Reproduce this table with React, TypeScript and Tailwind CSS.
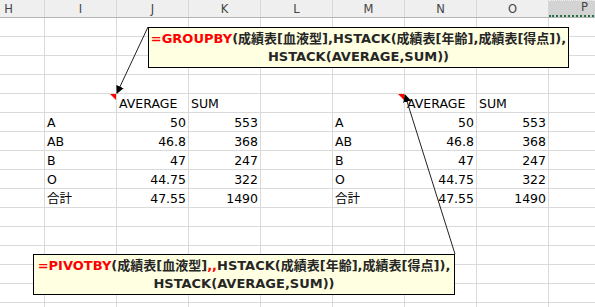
import React from "react";

const cols = ["H", "I", "J", "K", "L", "M", "N", "O", "P"];

type Cell = { t: string; r?: boolean };

const tableRows: Cell[][] = [
    [{ t: "" }, { t: "AVERAGE" }, { t: "SUM" }],
    [{ t: "A" }, { t: "50", r: true }, { t: "553", r: true }],
    [{ t: "AB" }, { t: "46.8", r: true }, { t: "368", r: true }],
    [{ t: "B" }, { t: "47", r: true }, { t: "247", r: true }],
    [{ t: "O" }, { t: "44.75", r: true }, { t: "322", r: true }],
    [{ t: "合計" }, { t: "47.55", r: true }, { t: "1490", r: true }],
];

function rowCells(i: number): Cell[] {
    // rows 5..10 hold the two result tables (I-K and M-O)
    const empty = { t: "" };
    const d = tableRows[i - 5];
    if (!d) return cols.map(() => empty);
    return [empty, d[0], d[1], d[2], empty, d[0], d[1], d[2], empty];
}

function Callout({ className, fn, mid }: { className: string; fn: string; mid: React.ReactNode }) {
    return (
        <div className={`absolute h-[41px] border border-black bg-[#ffffe1] pt-[2px] text-center font-bold text-[13px] leading-[18px] text-[#262626] font-['DejaVu_Sans','Noto_Sans_CJK_JP',sans-serif] whitespace-nowrap ${className}`}>
            <div>
                <span className="text-[#ff0000]">{fn}</span>
                {mid}
            </div>
            <div>HSTACK(AVERAGE,SUM))</div>
        </div>
    );
}

export default function App() {
    const rows = Array.from({ length: 16 }, (_, k) => k + 1);

    return (
        <div className="relative w-[595px] h-[307px] overflow-hidden bg-white font-['DejaVu_Sans','Noto_Sans_CJK_JP',sans-serif]">
            {/* column headers */}
            <div className="flex h-[18px] ml-[-27px] bg-[#efefef] border-b border-[#b5b5b5]">
                {cols.map((c) => (
                    <div
                        key={c}
                        className={`w-[72px] shrink-0 flex items-end justify-center pb-[1px] text-[11.5px] leading-[14px] text-[#444] border-r border-[#d8d8d8] ${
                            c === "P" ? "bg-[#d3d3d3] border-b-2 border-b-[#217346] border-t border-dotted border-t-[#f0f0f0]" : ""
                        }`}
                    >
                        {c}
                    </div>
                ))}
            </div>

            {/* grid */}
            {rows.map((r) => (
                <div key={r} className="flex h-[19px] ml-[-27px]">
                    {rowCells(r).map((cell, ci) => (
                        <div
                            key={ci}
                            className={`relative w-[72px] shrink-0 flex items-end pb-[1px] px-[2px] border-r border-b border-[#dadada] text-[12.5px] leading-[15px] text-black ${
                                cell.r ? "justify-end" : "justify-start"
                            }`}
                        >
                            {cell.t}
                            {r === 5 && (ci === 1 || ci === 5) && (
                                <span className="absolute top-0 right-0 w-0 h-0 border-t-[6px] border-l-[6px] border-t-[#ff0000] border-l-transparent" />
                            )}
                        </div>
                    ))}
                </div>
            ))}

            {/* arrows */}
            <svg className="absolute inset-0 pointer-events-none" width="595" height="307">
                <defs>
                    <marker id="ah" markerWidth="8" markerHeight="8" refX="7" refY="4" orient="auto" markerUnits="userSpaceOnUse">
                        <path d="M0,0 L8,4 L0,8 Z" fill="#000" />
                    </marker>
                </defs>
                <line x1="148" y1="27" x2="117" y2="93" stroke="#222" strokeWidth="1" markerEnd="url(#ah)" />
                <line x1="455" y1="254" x2="405" y2="95" stroke="#222" strokeWidth="1" markerEnd="url(#ah)" />
            </svg>

            <Callout
                className="left-[148px] top-[27px] w-[421px]"
                fn="=GROUPBY"
                mid="(成績表[血液型],HSTACK(成績表[年齢],成績表[得点]),"
            />
            <Callout
                className="left-[33px] top-[254px] w-[422px]"
                fn="=PIVOTBY"
                mid={
                    <>
                        (成績表[血液型]<span className="text-[#ff0000]">,,</span>HSTACK(成績表[年齢],成績表[得点]),
                    </>
                }
            />
        </div>
    );
}
